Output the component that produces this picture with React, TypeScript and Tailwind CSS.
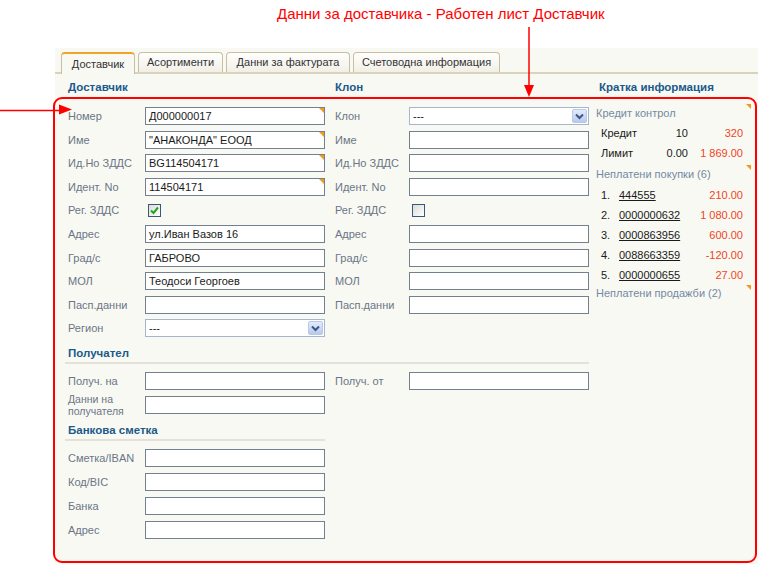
import React from 'react';

const LBL = 'text-[11px] leading-[18px] text-[#6a7686] whitespace-nowrap';

function Tri({ cls = '' }: { cls?: string }) {
  return (
    <span
      className={`absolute h-0 w-0 border-l-[5px] border-t-[5px] border-l-transparent border-t-[#f39a1e] ${cls}`}
    />
  );
}

function Input({ value = '', req = false }: { value?: string; req?: boolean }) {
  return (
    <div className="relative h-[18px] w-[180px] overflow-hidden whitespace-nowrap border border-[#72808f] bg-white pl-[3px] text-[11px] leading-[16px] text-[#1a1a1a]">
      {value}
      {req && <Tri cls="right-0 top-0" />}
    </div>
  );
}

function Select() {
  return (
    <div className="flex h-[18px] w-[180px] items-center border border-[#a5b7cd] bg-white pl-[3px] text-[11px] leading-[16px] text-[#1a1a1a]">
      <span className="flex-1">---</span>
      <span className="mr-[1px] flex h-[14px] w-[15px] items-center justify-center rounded-[2px] border border-[#b7c8e8] bg-gradient-to-b from-[#e4ecfc] to-[#b6c9ef]">
        <svg width="9" height="7" viewBox="0 0 9 7">
          <path d="M1 1.5 L4.5 5 L8 1.5" fill="none" stroke="#3f5680" strokeWidth="2" />
        </svg>
      </span>
    </div>
  );
}

function Check({ checked }: { checked: boolean }) {
  return (
    <div className="ml-[3px] flex h-[13px] w-[13px] items-center justify-center border border-[#3b5878] bg-gradient-to-br from-[#dcdcd4] to-white">
      {checked && (
        <svg width="9" height="9" viewBox="0 0 9 9">
          <path d="M1 4.5 L3.5 7 L8 1.5" fill="none" stroke="#21a621" strokeWidth="2" />
        </svg>
      )}
    </div>
  );
}

type Cell = { label: string; kind: 'input' | 'select' | 'check'; value?: string; req?: boolean; checked?: boolean } | null;

const leftRows: Cell[] = [
  { label: 'Номер', kind: 'input', value: 'Д000000017', req: true },
  { label: 'Име', kind: 'input', value: '"АНАКОНДА" ЕООД', req: true },
  { label: 'Ид.Но ЗДДС', kind: 'input', value: 'BG114504171', req: true },
  { label: 'Идент. No', kind: 'input', value: '114504171', req: true },
  { label: 'Рег. ЗДДС', kind: 'check', checked: true },
  { label: 'Адрес', kind: 'input', value: 'ул.Иван Вазов 16' },
  { label: 'Град/с', kind: 'input', value: 'ГАБРОВО' },
  { label: 'МОЛ', kind: 'input', value: 'Теодоси Георгоев' },
  { label: 'Пасп.данни', kind: 'input', value: '' },
  { label: 'Регион', kind: 'select' },
];

const rightRows: Cell[] = [
  { label: 'Клон', kind: 'select' },
  { label: 'Име', kind: 'input' },
  { label: 'Ид.Но ЗДДС', kind: 'input' },
  { label: 'Идент. No', kind: 'input' },
  { label: 'Рег. ЗДДС', kind: 'check', checked: false },
  { label: 'Адрес', kind: 'input' },
  { label: 'Град/с', kind: 'input' },
  { label: 'МОЛ', kind: 'input' },
  { label: 'Пасп.данни', kind: 'input' },
  null,
];

function Control({ c }: { c: NonNullable<Cell> }) {
  if (c.kind === 'select') return <Select />;
  if (c.kind === 'check') return <Check checked={!!c.checked} />;
  return <Input value={c.value} req={c.req} />;
}

function Row({ l, r }: { l: Cell; r: Cell }) {
  return (
    <div className="flex h-[18px] items-center">
      <div className={`w-[77px] ${LBL}`}>{l?.label}</div>
      <div className="w-[180px]">{l && <Control c={l} />}</div>
      <div className="w-[10px]" />
      <div className={`w-[74px] ${LBL}`}>{r?.label}</div>
      <div className="w-[180px]">{r && <Control c={r} />}</div>
    </div>
  );
}

const H = 'text-[11.5px] font-bold leading-[14px] text-[#1a5a8c] whitespace-nowrap';

const purchases = [
  ['1.', '444555', '210.00'],
  ['2.', '0000000632', '1 080.00'],
  ['3.', '0000863956', '600.00'],
  ['4.', '0088663359', '-120.00'],
  ['5.', '0000000655', '27.00'],
];

export default function App() {
  return (
    <div className="relative h-[564px] w-[758px] overflow-hidden bg-white font-['Liberation_Sans',Arial,sans-serif]">
      <div className="h-[48px] whitespace-nowrap pl-[277px] pt-[5px] text-[15px] leading-[18px] text-[#ff0000]">
        Данни за доставчика - Работен лист Доставчик
      </div>

      <div className="ml-[55px] h-[516px] bg-[#f9f9f3]">
        {/* tabs */}
        <div className="flex h-[26px] items-end gap-[3px] border-b-2 border-[#dad3bb] pl-[6px]">
          <div className="relative -mb-[2px] flex h-[22px] w-[74px] items-center justify-center rounded-t-[4px] border border-b-0 border-t-2 border-[#c7bf9f] border-t-[#f0a52a] bg-[#f9f9f3] text-[11px] text-[#333]">
            Доставчик
          </div>
          {[
            ['Асортименти', 'w-[85px]'],
            ['Данни за фактурата', 'w-[124px]'],
            ['Счетоводна информация', 'w-[147px]'],
          ].map(([t, w]) => (
            <div
              key={t}
              className={`flex h-[20px] ${w} items-center justify-center whitespace-nowrap rounded-t-[4px] border border-b-0 border-[#c7bf9f] bg-gradient-to-b from-white to-[#f1efe6] text-[11px] text-[#333]`}
            >
              {t}
            </div>
          ))}
        </div>

        <div className="flex pl-[13px]">
          {/* left block */}
          <div className="w-[521px]">
            <div className="mt-[6px] flex">
              <div className={`w-[267px] ${H}`}>Доставчик</div>
              <div className={H}>Клон</div>
            </div>
            <div className="mt-[13px] flex flex-col gap-[5.6px]">
              {leftRows.map((l, i) => (
                <Row key={i} l={l} r={rightRows[i]} />
              ))}
            </div>

            <div className="-ml-[3px] mt-[8.6px] w-[524px] border-b-2 border-[#e3e1d8] pb-[2px] pl-[3px]">
              <div className={H}>Получател</div>
            </div>
            <div className="mt-[8.3px] flex flex-col gap-[6px]">
              <Row l={{ label: 'Получ. на', kind: 'input' }} r={{ label: 'Получ. от', kind: 'input' }} />
              <div className="flex h-[18px] items-center">
                <div className="w-[77px] text-[10.5px] leading-[12px] text-[#6a7686]">
                  <div>Данни на</div>
                  <div>получателя</div>
                </div>
                <Input />
              </div>
            </div>

            <div className="-ml-[3px] mt-[9px] w-[260px] border-b-2 border-[#e3e1d8] pb-[1.5px] pl-[3px]">
              <div className={H}>Банкова сметка</div>
            </div>
            <div className="mt-[8.3px] flex flex-col gap-[6px]">
              {['Сметка/IBAN', 'Код/BIC', 'Банка', 'Адрес'].map((t) => (
                <div key={t} className="flex h-[18px] items-center">
                  <div className={`w-[77px] ${LBL}`}>{t}</div>
                  <Input />
                </div>
              ))}
            </div>
          </div>

          {/* right panel */}
          <div className="ml-[7px] w-[155px]">
            <div className={`mt-[6px] pl-[3px] ${H}`}>Кратка информация</div>
            <div className="mt-[9px] text-[11px]">
              <div className="relative flex h-[20px] items-center text-[#7389a3]">
                Кредит контрол
                <Tri cls="right-0 top-[1px]" />
              </div>
              {[
                ['Кредит', '10', '320'],
                ['Лимит', '0.00', '1 869.00'],
              ].map(([a, b, c]) => (
                <div key={a} className="flex h-[20px] w-[147px] items-center pl-[5px] text-[#1a1a1a]">
                  <span className="flex-1">{a}</span>
                  <span className="text-right">{b}</span>
                  <span className="w-[55px] text-right text-[#f04424]">{c}</span>
                </div>
              ))}
              <div className="relative flex h-[22px] items-center text-[#7389a3]">
                Неплатени покупки (6)
                <Tri cls="right-0 top-[2px]" />
              </div>
              {purchases.map(([n, id, amt]) => (
                <div key={n} className="flex h-[20px] w-[147px] items-center pl-[5px] text-[#1a1a1a]">
                  <span className="w-[18px]">{n}</span>
                  <span className="flex-1 underline">{id}</span>
                  <span className="text-right text-[#f04424]">{amt}</span>
                </div>
              ))}
              <div className="relative flex h-[16px] items-center text-[#7389a3]">
                Неплатени продажби (2)
                <Tri cls="right-0 top-[0px]" />
              </div>
            </div>
          </div>
        </div>
      </div>

      {/* annotations */}
      <div className="pointer-events-none absolute left-[53px] top-[97px] h-[466px] w-[704px] rounded-[9px] border-2 border-[#ff0000]" />
      <svg className="pointer-events-none absolute left-0 top-0" width="758" height="564">
        <line x1="529" y1="27" x2="529" y2="88" stroke="#ff0000" strokeWidth="1.5" />
        <polygon points="524,85 534,85 529,97" fill="#ff0000" />
        <line x1="0" y1="110.5" x2="62" y2="110.5" stroke="#ff0000" strokeWidth="1.5" />
        <polygon points="59,104.5 72,109.5 59,114.5" fill="#ff0000" />
      </svg>
    </div>
  );
}
